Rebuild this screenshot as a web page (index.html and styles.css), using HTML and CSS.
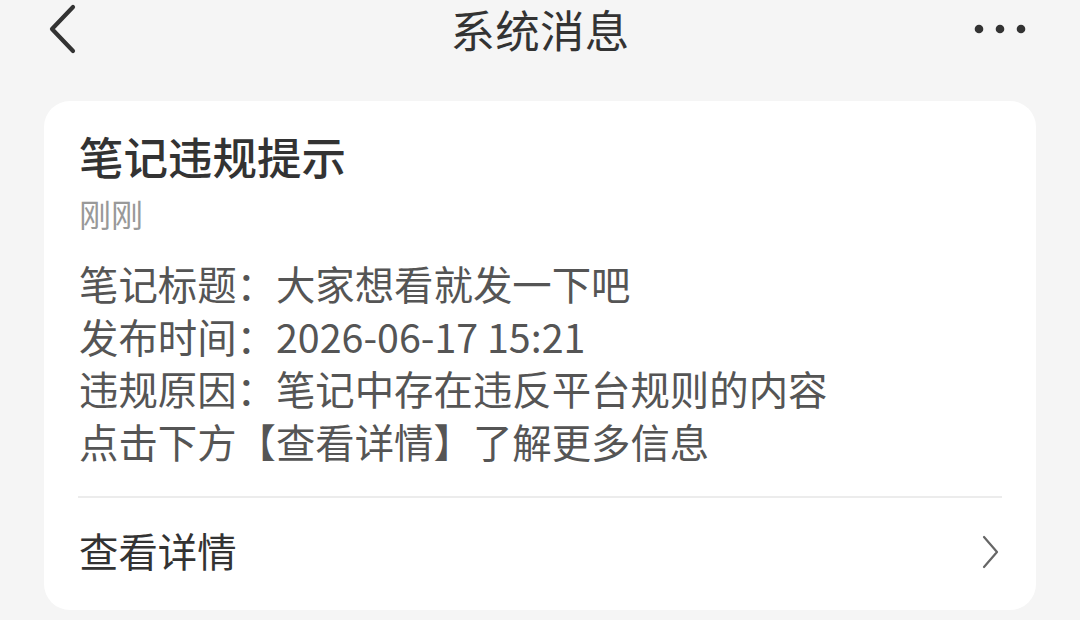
FILE: index.html
```html
<!DOCTYPE html>
<html lang="zh-CN">
<head>
<meta charset="utf-8">
<title>系统消息</title>
<link rel="stylesheet" href="styles.css">
</head>
<body>
<header class="navbar">
  <div class="nav-left">
    <svg class="back-icon" width="30" height="52" viewBox="0 0 30 52">
      <polyline points="25,4 4,26 25,48" fill="none" stroke="#333" stroke-width="4.2" stroke-linecap="round" stroke-linejoin="round"/>
    </svg>
  </div>
  <h1 class="nav-title">系统消息</h1>
  <div class="nav-right">
    <svg class="more-icon" width="56" height="12" viewBox="0 0 56 12">
      <circle cx="6" cy="6" r="4.3" fill="#333"/>
      <circle cx="27" cy="6" r="4.3" fill="#333"/>
      <circle cx="48" cy="6" r="4.3" fill="#333"/>
    </svg>
  </div>
</header>

<main class="card">
  <h2 class="card-title">笔记违规提示</h2>
  <div class="card-time">刚刚</div>
  <div class="card-body">
    <p class="line">笔记标题：大家想看就发一下吧</p>
    <p class="line">发布时间：2026-06-17 15:21</p>
    <p class="line">违规原因：笔记中存在违反平台规则的内容</p>
    <p class="line">点击下方【查看详情】了解更多信息</p>
  </div>
  <div class="divider"></div>
  <div class="detail-row">
    <span class="detail-text">查看详情</span>
    <svg class="chevron" width="20" height="34" viewBox="0 0 20 34">
      <polyline points="3,2 16,17 3,32" fill="none" stroke="#666" stroke-width="2.2" stroke-linecap="round" stroke-linejoin="round"/>
    </svg>
  </div>
</main>
</body>
</html>
```

FILE: styles.css
```css
html, body {
  margin: 0;
  padding: 0;
}
body {
  background: #f5f5f5;
  font-family: "Noto Sans CJK SC", "Noto Sans", sans-serif;
  color: #333;
  width: 1080px;
  height: 620px;
  overflow: hidden;
}
.navbar {
  display: grid;
  grid-template-columns: 1fr auto 1fr;
  align-items: center;
  height: 54px;
  padding-top: 2px;
}
.nav-left {
  display: flex;
  align-items: center;
  padding-left: 48px;
}
.back-icon {
  display: block;
}
.nav-title {
  margin: 0;
  font-size: 44.5px;
  font-weight: 400;
  line-height: 54px;
  color: #333;
  letter-spacing: 0.3px;
}
.nav-right {
  display: flex;
  justify-content: flex-end;
  padding-right: 51px;
}
.more-icon {
  display: block;
}
.card {
  margin: 45px 44px 0 44px;
  background: #fff;
  border-radius: 26px;
  padding: 25px 34px 0 34px;
}
.card-title {
  margin: 0;
  font-size: 44.5px;
  font-weight: 500;
  line-height: 60px;
  color: #333;
  padding-left: 1px;
}
.card-time {
  margin-top: 5px;
  font-size: 32px;
  line-height: 44px;
  color: #999;
  padding-left: 1px;
}
.card-body {
  margin-top: 22px;
  color: #555;
}
.line {
  margin: 0;
  font-size: 39.4px;
  line-height: 52.5px;
  padding-left: 1px;
}
.divider {
  margin-top: 29px;
  height: 2px;
  background: #ececec;
}
.detail-row {
  display: flex;
  align-items: center;
  justify-content: space-between;
  height: 104px;
  padding-bottom: 8px;
}
.detail-text {
  font-size: 39.4px;
  line-height: 52px;
  color: #333;
  padding-left: 1px;
}
.chevron {
  display: block;
  margin-right: 1px;
  margin-top: 4px;
}
```
